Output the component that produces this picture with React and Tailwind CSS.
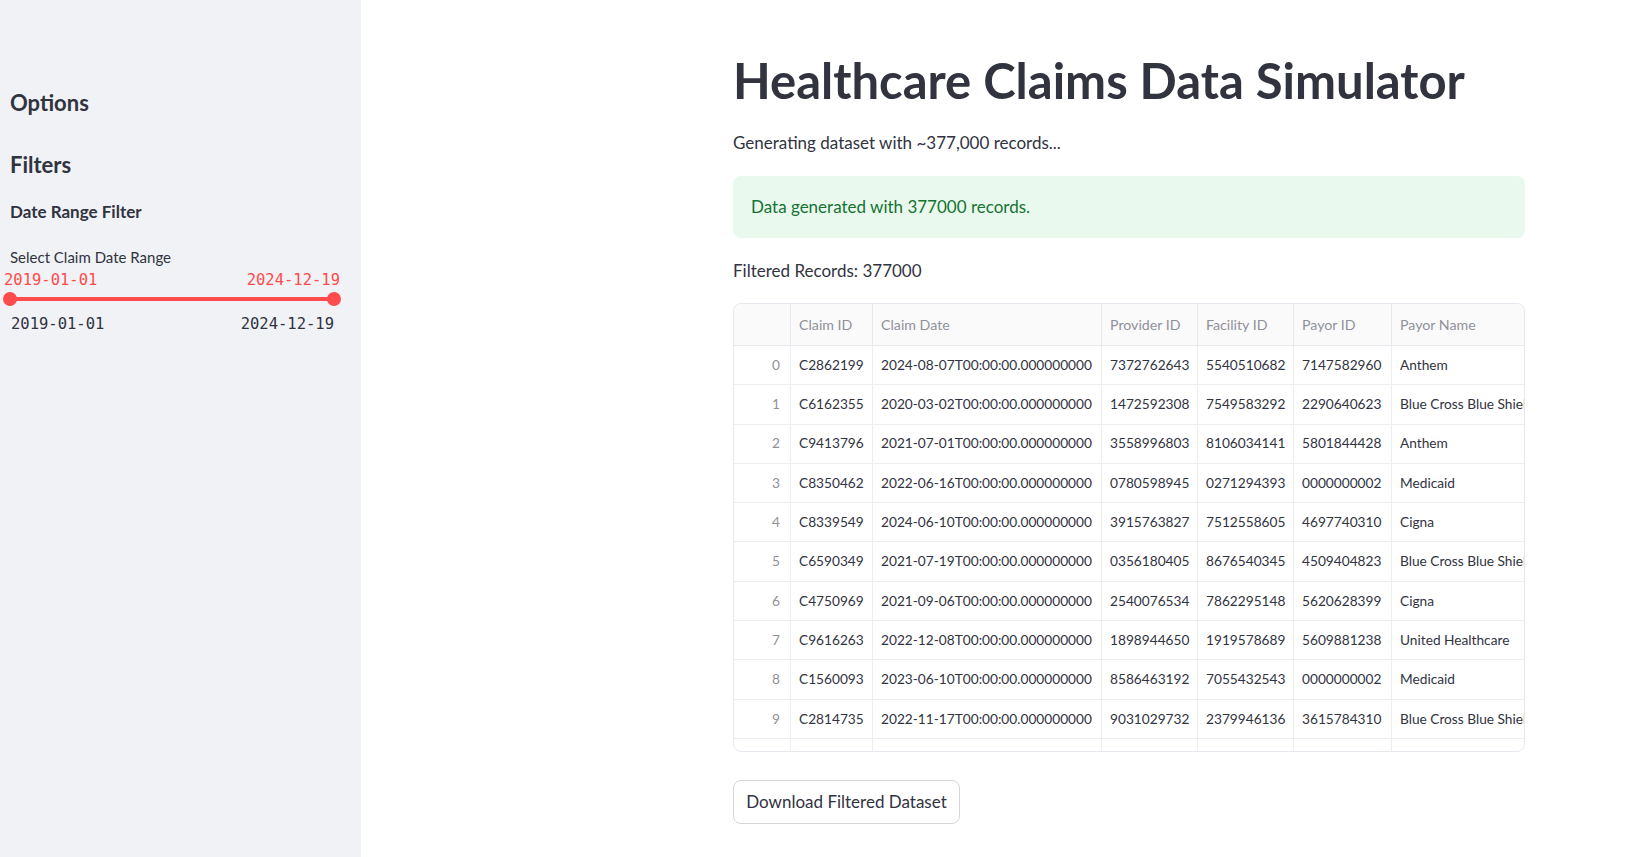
import React from "react";

const rows = [
  ["0", "C2862199", "2024-08-07T00:00:00.000000000", "7372762643", "5540510682", "7147582960", "Anthem"],
  ["1", "C6162355", "2020-03-02T00:00:00.000000000", "1472592308", "7549583292", "2290640623", "Blue Cross Blue Shield"],
  ["2", "C9413796", "2021-07-01T00:00:00.000000000", "3558996803", "8106034141", "5801844428", "Anthem"],
  ["3", "C8350462", "2022-06-16T00:00:00.000000000", "0780598945", "0271294393", "0000000002", "Medicaid"],
  ["4", "C8339549", "2024-06-10T00:00:00.000000000", "3915763827", "7512558605", "4697740310", "Cigna"],
  ["5", "C6590349", "2021-07-19T00:00:00.000000000", "0356180405", "8676540345", "4509404823", "Blue Cross Blue Shield"],
  ["6", "C4750969", "2021-09-06T00:00:00.000000000", "2540076534", "7862295148", "5620628399", "Cigna"],
  ["7", "C9616263", "2022-12-08T00:00:00.000000000", "1898944650", "1919578689", "5609881238", "United Healthcare"],
  ["8", "C1560093", "2023-06-10T00:00:00.000000000", "8586463192", "7055432543", "0000000002", "Medicaid"],
  ["9", "C2814735", "2022-11-17T00:00:00.000000000", "9031029732", "2379946136", "3615784310", "Blue Cross Blue Shield"],
  ["10", "C5521840", "2020-05-14T00:00:00.000000000", "6621039874", "4417820935", "1102938475", "Aetna"],
];

const headers = ["", "Claim ID", "Claim Date", "Provider ID", "Facility ID", "Payor ID", "Payor Name"];
const gridCols = "grid grid-cols-[57px_82px_229px_96px_96px_98px_200px]";

export default function App() {
  return (
    <div
      className="flex h-[857px] w-[1632px] overflow-hidden bg-white text-[#31333f]"
      style={{ fontFamily: "Lato, 'Noto Sans', sans-serif" }}
    >
      {/* Sidebar */}
      <aside className="w-[361px] shrink-0 bg-[#f0f2f6]">
        <div className="pt-[87px]">
          <div className="pl-[10px] text-[22px] font-bold leading-[32px]">Options</div>
          <div className="mt-[30px] pl-[10px] text-[22px] font-bold leading-[32px]">Filters</div>
          <div className="mt-[18px] pl-[10px] text-[17px] font-bold leading-[26px]">Date Range Filter</div>
          <div className="mt-[21px] pl-[10px] text-[15px] leading-[22px]">Select Claim Date Range</div>
          <div
            className="mt-[2px] flex w-[340px] justify-between pl-[4px] text-[15.5px] leading-[20px] text-[#ff4b4b]"
            style={{ fontFamily: "'DejaVu Sans Mono', monospace" }}
          >
            <span>2019-01-01</span>
            <span>2024-12-19</span>
          </div>
          <div className="relative ml-[10px] mt-[2px] h-[14px] w-[324px]">
            <div className="absolute left-0 right-0 top-[5px] h-[4px] bg-[#ff4b4b]" />
            <div className="absolute left-[-7px] top-0 h-[14px] w-[14px] rounded-full bg-[#ff4b4b]" />
            <div className="absolute right-[-7px] top-0 h-[14px] w-[14px] rounded-full bg-[#ff4b4b]" />
          </div>
          <div
            className="mt-[7px] flex w-[334px] justify-between pl-[11px] text-[15.5px] leading-[22px] text-[#31333f]"
            style={{ fontFamily: "'DejaVu Sans Mono', monospace" }}
          >
            <span>2019-01-01</span>
            <span>2024-12-19</span>
          </div>
        </div>
      </aside>

      {/* Main */}
      <main className="flex-1 pl-[372px] pt-[50px]">
        <div className="w-[792px]">
          <h1 className="text-[49px] font-bold leading-[60px] text-[#31333f]">
            Healthcare Claims Data Simulator
          </h1>
          <p className="mt-[19px] text-[17px] leading-[28px]">Generating dataset with ~377,000 records...</p>
          <div className="mt-[19px] flex h-[62px] items-center rounded-[8px] bg-[#e9f9ee] px-[18px] text-[17px] text-[#177233]">
            Data generated with 377000 records.
          </div>
          <p className="mt-[19px] text-[17px] leading-[28px]">Filtered Records: 377000</p>

          <div className="mt-[18px] h-[449px] overflow-hidden rounded-[8px] border border-[#e6e8ee] text-[13.7px]">
            <div className={`${gridCols} h-[42px] bg-[#fafafb] text-[#8f919a]`}>
              {headers.map((h, i) => (
                <div
                  key={i}
                  className="flex items-center overflow-hidden whitespace-nowrap border-b border-r border-[#e6e8ee] px-[8px] text-[14.2px]"
                >
                  {h}
                </div>
              ))}
            </div>
            {rows.map((r) => (
              <div key={r[0]} className={`${gridCols} h-[39.3px]`}>
                {r.map((c, i) => (
                  <div
                    key={i}
                    className={
                      i === 0
                        ? "flex items-center justify-end overflow-hidden whitespace-nowrap border-b border-r border-[#ededf0] px-[10px] text-[#8f919a]"
                        : "flex items-center overflow-hidden whitespace-nowrap border-b border-r border-[#ededf0] px-[8px] text-[#31333f]"
                    }
                  >
                    {c}
                  </div>
                ))}
              </div>
            ))}
          </div>

          <button className="mt-[28px] h-[44px] w-[227px] rounded-[8px] border border-[#d5d6da] bg-white text-[17px] text-[#31333f]">
            Download Filtered Dataset
          </button>
        </div>
      </main>
    </div>
  );
}
